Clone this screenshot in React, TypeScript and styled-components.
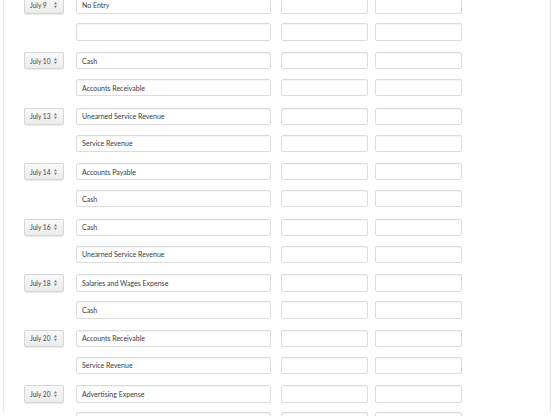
import styled, { createGlobalStyle } from 'styled-components';

const GlobalStyle = createGlobalStyle`
  html, body {
    margin: 0;
    padding: 0;
    background: #ffffff;
  }
  body {
    font-family: Lato, "Open Sans", "Liberation Sans", sans-serif;
    color: #333;
  }
`;

const Page = styled.div`
  height: 416px;
  overflow: hidden;
  background: #ffffff;
`;

const Sheet = styled.div`
  margin-left: 3px;
  width: 548px;
  height: 100%;
  border-left: 1px solid #e6e6e6;
  border-right: 1px solid #e6e6e6;
  padding-left: 20px;
  box-sizing: border-box;
`;

const EntryList = styled.div`
  margin-top: -3.6px;
  display: flex;
  flex-direction: column;
  gap: 11.2px;
`;

const Group = styled.div`
  display: flex;
  flex-direction: column;
  gap: 9.6px;
`;

const Line = styled.div`
  display: flex;
  align-items: center;
  height: 17.4px;
`;

const DateCell = styled.div`
  width: 40px;
  flex: none;
  margin-right: 12px;
`;

const DateSelect = styled.div`
  height: 17.4px;
  box-sizing: border-box;
  display: flex;
  align-items: center;
  justify-content: space-between;
  gap: 3px;
  padding: 0 6px 0 5px;
  border: 1px solid #d6d6d6;
  border-radius: 2px;
  background: linear-gradient(#f9f9f9, #ebebeb);
  box-shadow: 0 1px 1px rgba(0, 0, 0, 0.08);
  font-size: 6.6px;
  color: #444;
  white-space: nowrap;
`;

const Arrows = styled.svg`
  flex: none;
  width: 3px;
  height: 6px;
  fill: #777;
`;

const Field = styled.input<{ $width: number; $gap: number }>`
  flex: none;
  width: ${(p) => p.$width}px;
  margin-left: ${(p) => p.$gap}px;
  height: 17.4px;
  box-sizing: border-box;
  border: 1px solid #dcdcdc;
  border-radius: 2px;
  box-shadow: inset 0 1px 1px rgba(0, 0, 0, 0.04);
  background: #fff;
  padding: 0 5px;
  font-family: Lato, "Open Sans", "Liberation Sans", sans-serif;
  font-size: 7px;
  color: #3a3a3a;
  outline: none;
`;

const entries = [
  { date: 'July 9', accounts: ['No Entry', ''] },
  { date: 'July 10', accounts: ['Cash', 'Accounts Receivable'] },
  { date: 'July 13', accounts: ['Unearned Service Revenue', 'Service Revenue'] },
  { date: 'July 14', accounts: ['Accounts Payable', 'Cash'] },
  { date: 'July 16', accounts: ['Cash', 'Unearned Service Revenue'] },
  { date: 'July 18', accounts: ['Salaries and Wages Expense', 'Cash'] },
  { date: 'July 20', accounts: ['Accounts Receivable', 'Service Revenue'] },
  { date: 'July 20', accounts: ['Advertising Expense', ''] },
];

const App = () => {
  return (
    <Page>
      <GlobalStyle />
      <Sheet>
        <EntryList>
          {entries.map((entry, i) => (
            <Group key={i}>
              {entry.accounts.map((account, j) => (
                <Line key={j}>
                  <DateCell>
                    {j === 0 && (
                      <DateSelect>
                        <span>{entry.date}</span>
                        <Arrows viewBox="0 0 3 6">
                          <path d="M1.5 0 L3 2.2 L0 2.2 Z M1.5 6 L3 3.8 L0 3.8 Z" />
                        </Arrows>
                      </DateSelect>
                    )}
                  </DateCell>
                  <Field $width={195} $gap={0} readOnly defaultValue={account} />
                  <Field $width={87} $gap={10} readOnly defaultValue="" />
                  <Field $width={87} $gap={7} readOnly defaultValue="" />
                </Line>
              ))}
            </Group>
          ))}
        </EntryList>
      </Sheet>
    </Page>
  );
};

export default App;
